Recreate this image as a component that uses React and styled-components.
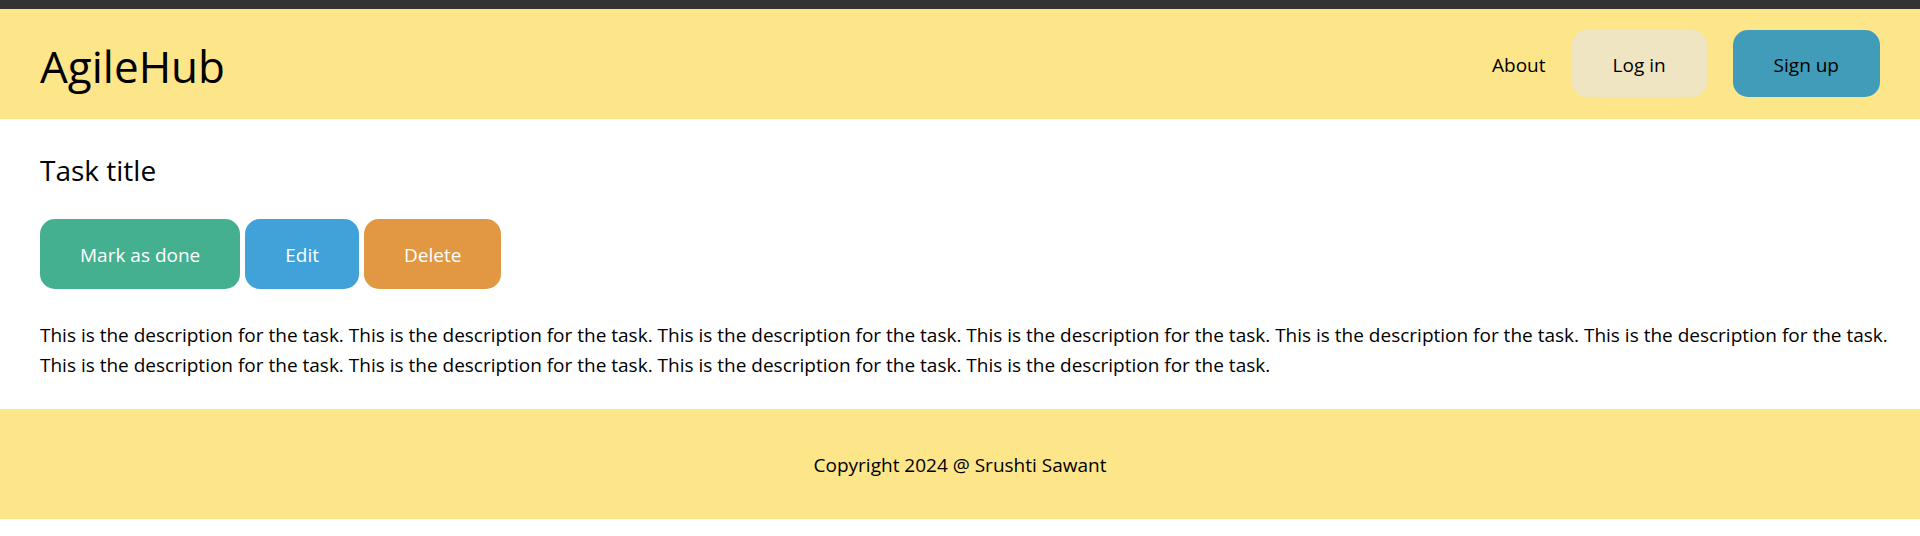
import React from "react";
import styled, { createGlobalStyle } from "styled-components";

const GlobalStyle = createGlobalStyle`
  * { box-sizing: border-box; }
  body {
    margin: 0;
    background: #fff;
    color: #000;
    font-family: "Open Sans", "Noto Sans", sans-serif;
    font-size: 19px;
    line-height: 30px;
  }
`;

const TopStrip = styled.div`
  height: 9px;
  background: #333;
`;

const Header = styled.header`
  display: flex;
  align-items: flex-start;
  justify-content: space-between;
  padding: 21px 40px 19px;
  background: #fde68a;
`;

const Brand = styled.a`
  padding-top: 2px;
  font-size: 44px;
  line-height: 68px;
  color: #000;
  text-decoration: none;
`;

const Nav = styled.nav`
  display: flex;
  align-items: center;
  gap: 26px;
`;

const NavLink = styled.a`
  padding-top: 2px;
  color: #000;
  text-decoration: none;
`;

const Button = styled.button`
  padding: 21px 40px 19px;
  border: 0;
  border-radius: 15px;
  background: ${(p) => p.$bg};
  color: #fff;
  font: inherit;
  cursor: pointer;
`;

const NavButton = styled(Button)`
  padding: 20px 41px 17px;
  color: #000;
`;

const Main = styled.main`
  padding: 31px 40px 29px;
`;

const Title = styled.h1`
  margin: 0 0 29px;
  font-size: 28px;
  line-height: 40px;
  font-weight: 400;
`;

const Actions = styled.div`
  display: flex;
  gap: 5px;
  margin-bottom: 31px;
`;

const Description = styled.p`
  margin: 0 -20px 0 0;
`;

const Footer = styled.footer`
  padding: 41px 40px 39px;
  background: #fde68a;
  text-align: center;
`;

const description = Array(10).fill("This is the description for the task.").join(" ");

export default function App() {
  return (
    <>
      <GlobalStyle />
      <TopStrip />
      <Header>
        <Brand href="#">AgileHub</Brand>
        <Nav>
          <NavLink href="#about">About</NavLink>
          <NavButton type="button" $bg="#efe5c3">Log in</NavButton>
          <NavButton type="button" $bg="#409cb8">Sign up</NavButton>
        </Nav>
      </Header>
      <Main>
        <Title>Task title</Title>
        <Actions>
          <Button type="button" $bg="#45b08f">Mark as done</Button>
          <Button type="button" $bg="#40a2d8">Edit</Button>
          <Button type="button" $bg="#e29843">Delete</Button>
        </Actions>
        <Description>{description}</Description>
      </Main>
      <Footer>Copyright 2024 @ Srushti Sawant</Footer>
    </>
  );
}
